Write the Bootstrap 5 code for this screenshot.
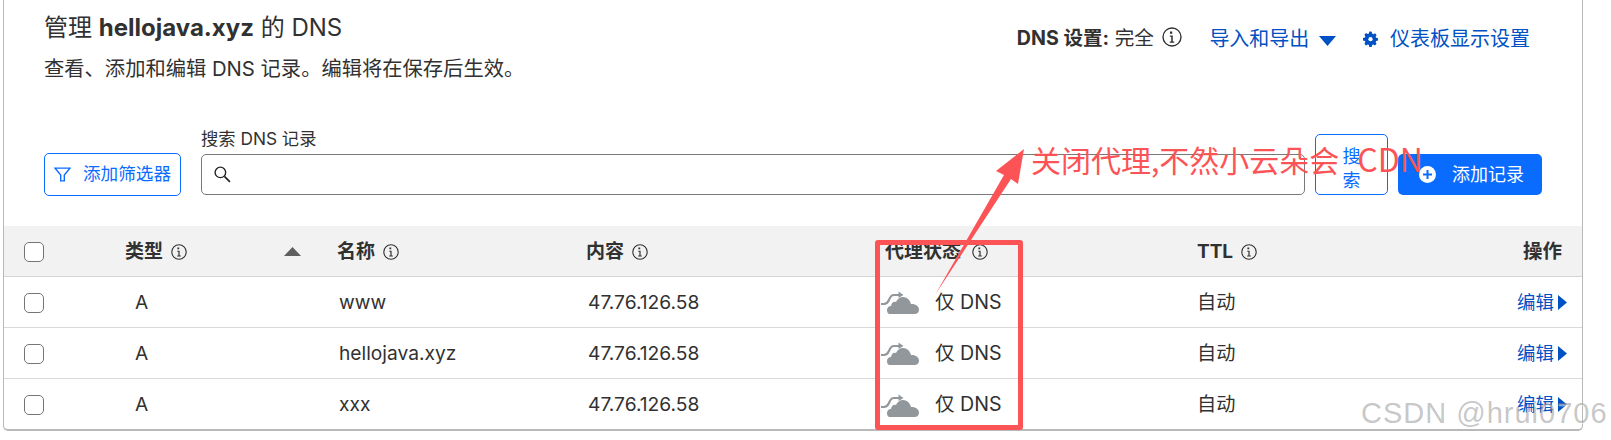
<!DOCTYPE html>
<html lang="zh-CN"><head><meta charset="utf-8"><title>DNS</title>
<link href="https://cdn.jsdelivr.net/npm/bootstrap@5.3.0/dist/css/bootstrap.min.css" rel="stylesheet">
<style>
html,body{height:440px;overflow:hidden}
body{background:#fff;color:#313131;font-family:Inter,"Noto Sans CJK SC",sans-serif;font-size:19px;position:relative}
.dns-panel{width:1580px;height:431px;margin-left:3px;border:solid #b9b9b9;border-width:0 1px 2px 1px;border-radius:0 0 5px 5px}
.top-zone{height:226px;padding:0 40px}
.head-row{height:116px;padding-top:9px}
.page-title{font-size:24px;font-weight:400;margin:0 0 8px;line-height:38px}
.page-sub{margin:0;font-size:20.3px;line-height:28px}
.head-links{padding:15px 12px 0 0;font-size:19.6px;gap:27px}
.blue-link{color:#0051c3;text-decoration:none;font-size:20px}
.filter-row{gap:20px;height:80px}
.btn-filter{width:137px;height:43px;border:1px solid #0a6cff;color:#0a6cff;border-radius:5px;font-size:17.6px;padding:0;background:#fff;white-space:nowrap;align-self:flex-end;gap:12px}
.search-wrap{flex:1;min-width:0;align-self:flex-end;margin-bottom:1px}
.search-wrap label{font-size:17.3px;display:block;line-height:24px;margin-bottom:3px}
.search-box{height:41px;border:1px solid #797979;border-radius:5px;padding-left:11px}
.btn-search{width:73px;height:61px;border:1px solid #0a6cff;color:#0a6cff;border-radius:5px;background:#fff;font-size:18px;line-height:24px;padding:8px 26px 0;margin:0 0 1px -10px;align-self:flex-end;word-break:break-all}
.btn-add{width:144px;height:41px;background:#0a6cff;color:#fff;border:0;border-radius:5px;font-size:18px;margin:0 0 1px -10px;padding:0 0 0 3px;align-self:flex-end}
.dns-table{table-layout:fixed;width:1578px;margin:0;color:#313131;--bs-table-border-color:#d9d9d9}
.dns-table th{background:#f2f2f2;height:50px;font-size:19px;font-weight:700;vertical-align:middle;padding:2px 0 0;border-bottom:1px solid #d4d4d4;color:#313131}
.dns-table td{height:51px;vertical-align:middle;padding:2px 0 0;font-size:19.2px;border-bottom:1px solid #d9d9d9;color:#313131}
.dns-table tr:last-child td{border-bottom:0}
.box{display:block;width:20px;height:20px;border:1px solid #757575;border-radius:5px;margin-left:20px;background:#fff}
.cell-type{padding-left:10px!important}
.cell-pad{padding-left:2px!important}
.head-proxy{padding-left:4px!important}
.cell-act{text-align:right;padding-right:15px!important}
.head-act{padding-right:20px!important;font-size:19.5px!important}
.sort-wrap{padding-right:36px}
.proxy-text{font-size:19.6px}
.act-link{font-size:18.4px}
.act-link svg{margin-left:-1px;vertical-align:-1px}
.red-box{position:absolute;left:875px;top:240px;width:148px;height:190px;border:5px solid #fc5456;border-radius:3px}
.red-note{position:absolute;left:1031px;top:136px;color:#fc5456;font-size:30px;line-height:44px;white-space:nowrap;font-family:"Noto Sans CJK SC",sans-serif;font-weight:400}
.note-tail{margin-left:18px;font-size:32px}
.red-arrow{position:absolute;left:0;top:0;pointer-events:none}
.mark-text{position:absolute;left:1361px;top:397px;font:29px "Liberation Sans",sans-serif;color:rgba(120,120,120,.42);letter-spacing:1px;white-space:nowrap;text-shadow:1px 1px 1px rgba(255,255,255,.6)}
.i-mini{vertical-align:-2px;margin-left:3px}
.head-proxy .i-mini{margin-left:6px}
.ic-gear{vertical-align:-1px;margin-right:12px}
</style></head><body>
<svg width="0" height="0" class="position-absolute"><defs>
<symbol id="info" viewBox="0 0 16 16"><circle cx="8" cy="8" r="7.200" fill="none" stroke="currentColor" stroke-width="1.100"/><path d="M6.400 3.600h1.800v1.700H6.400zM6.300 6.800h2.300v4.800h1.200v.9H6.200v-.9h1.200V7.700H6.300z" fill="currentColor"/></symbol>
<symbol id="proxyoff" viewBox="0 0 38 26"><path d="M9 25C6.500 25 6 22.500 6 21c0-2.500 2-4 4-4 .5-3.500 3-5 5-4 1-3 4-5 7-5 4 0 7 3 8 7 4-.5 8 2 8 5.500 0 3-2 4.500-4.500 4.500z" fill="#92979b"/><path d="M0 15h3c3 0 4-2 5-4 1-3 2-5 5-5h5" fill="none" stroke="#fff" stroke-width="4.500"/><path d="M0 15h3c3 0 4-2 5-4 1-3 2-5 5-5h5" fill="none" stroke="#92979b" stroke-width="2.200"/><path d="M17.500 2.500L22.500 6 17.500 9z" fill="#92979b"/></symbol>
<symbol id="tick" viewBox="0 0 9 15"><path d="M0 0l9 7.500L0 15z" fill="#0051c3"/></symbol>
</defs></svg>
<div class="dns-panel">
 <div class="top-zone">
  <div class="head-row d-flex justify-content-between">
   <div><h1 class="page-title">管理 <b>hellojava.xyz</b> 的 DNS</h1><p class="page-sub">查看、添加和编辑 DNS 记录。编辑将在保存后生效。</p></div>
   <div class="head-links d-flex align-items-start">
    <span><b>DNS 设置:</b> 完全 <svg width="20" height="20" class="i-mini"><use href="#info"/></svg></span>
    <a class="blue-link" href="#">导入和导出 <svg width="17" height="10" viewBox="0 0 17 10" class="ms-1"><path d="M0 0h17L8.500 10z" fill="#0051c3"/></svg></a>
    <a class="blue-link" href="#"><svg width="15" height="16" viewBox="0 0 16 16" class="ic-gear"><path d="M8 0l1.300.2.400 2 1.300.6 1.800-1 1.700 1.800-1 1.700.5 1.300 2 .5v2.500l-2 .5-.5 1.300 1 1.700-1.700 1.800-1.800-1-1.300.6-.4 2H6.700l-.4-2-1.300-.6-1.800 1L1.500 13l1-1.700L2 10l-2-.5V7l2-.5.5-1.300-1-1.700L3.200 1.700l1.800 1 1.300-.6.400-2z" fill="#0051c3"/><circle cx="8" cy="8.200" r="2.300" fill="#fff"/></svg>仪表板显示设置</a>
   </div>
  </div>
  <div class="filter-row d-flex">
   <button class="btn-filter d-flex align-items-center justify-content-center" type="button"><svg width="17" height="17" viewBox="0 0 16 16"><path d="M1 2h14L9.700 8.500V14H6.300V8.500z" fill="none" stroke="#0a6cff" stroke-width="1.300"/></svg>添加筛选器</button>
   <div class="search-wrap"><label for="q">搜索 DNS 记录</label>
    <div class="search-box d-flex align-items-center"><svg width="19" height="19" viewBox="0 0 18 18"><circle cx="7" cy="7" r="5" fill="none" stroke="#222" stroke-width="1.300"/><path d="M10.800 10.800L16 16" stroke="#222" stroke-width="1.600"/></svg></div></div>
   <button class="btn-search" type="button">搜索</button>
   <button class="btn-add d-flex align-items-center justify-content-center gap-3" type="button"><svg width="17" height="17" viewBox="0 0 17 17"><circle cx="8.500" cy="8.500" r="8.500" fill="#fff"/><path d="M8.500 4v9M4 8.500h9" stroke="#0a6cff" stroke-width="2"/></svg>添加记录</button>
  </div>
 </div>
 <table class="table dns-table"><colgroup><col style="width:121px"><col style="width:212px"><col style="width:249px"><col style="width:295px"><col style="width:316px"><col style="width:300px"><col></colgroup>
  <thead><tr><th><span class="box"></span></th>
   <th><div class="d-flex justify-content-between sort-wrap"><span>类型 <svg width="16" height="16" class="i-mini"><use href="#info"/></svg></span><svg width="17" height="9" viewBox="0 0 17 9" class="align-self-center"><path d="M0 9L8.500 0 17 9z" fill="#5f5f5f"/></svg></div></th>
   <th>名称 <svg width="16" height="16" class="i-mini"><use href="#info"/></svg></th><th>内容 <svg width="16" height="16" class="i-mini"><use href="#info"/></svg></th><th class="head-proxy">代理状态 <svg width="16" height="16" class="i-mini"><use href="#info"/></svg></th><th>TTL <svg width="16" height="16" class="i-mini"><use href="#info"/></svg></th><th class="cell-act head-act">操作</th></tr></thead>
  <tbody>
   <tr><td><span class="box"></span></td><td class="cell-type">A</td><td class="cell-pad">www</td><td class="cell-pad">47.76.126.58</td><td><div class="d-flex align-items-center gap-3"><svg width="38" height="26"><use href="#proxyoff"/></svg><span class="proxy-text">仅 DNS</span></div></td><td>自动</td><td class="cell-act"><a class="blue-link act-link" href="#">编辑 <svg width="9" height="15"><use href="#tick"/></svg></a></td></tr>
   <tr><td><span class="box"></span></td><td class="cell-type">A</td><td class="cell-pad">hellojava.xyz</td><td class="cell-pad">47.76.126.58</td><td><div class="d-flex align-items-center gap-3"><svg width="38" height="26"><use href="#proxyoff"/></svg><span class="proxy-text">仅 DNS</span></div></td><td>自动</td><td class="cell-act"><a class="blue-link act-link" href="#">编辑 <svg width="9" height="15"><use href="#tick"/></svg></a></td></tr>
   <tr><td><span class="box"></span></td><td class="cell-type">A</td><td class="cell-pad">xxx</td><td class="cell-pad">47.76.126.58</td><td><div class="d-flex align-items-center gap-3"><svg width="38" height="26"><use href="#proxyoff"/></svg><span class="proxy-text">仅 DNS</span></div></td><td>自动</td><td class="cell-act"><a class="blue-link act-link" href="#">编辑 <svg width="9" height="15"><use href="#tick"/></svg></a></td></tr>
  </tbody></table>
</div>
<div class="red-box"></div>
<svg class="red-arrow" width="1611" height="440"><path d="M935 295L1004 175 996 171 1024 149 1018 184 1011 179z" fill="#fc5456"/></svg>
<div class="red-note">关闭代理,不然小云朵会<span class="note-tail">CDN</span></div>
<div class="mark-text">CSDN @hrui0706</div>
</body></html>
